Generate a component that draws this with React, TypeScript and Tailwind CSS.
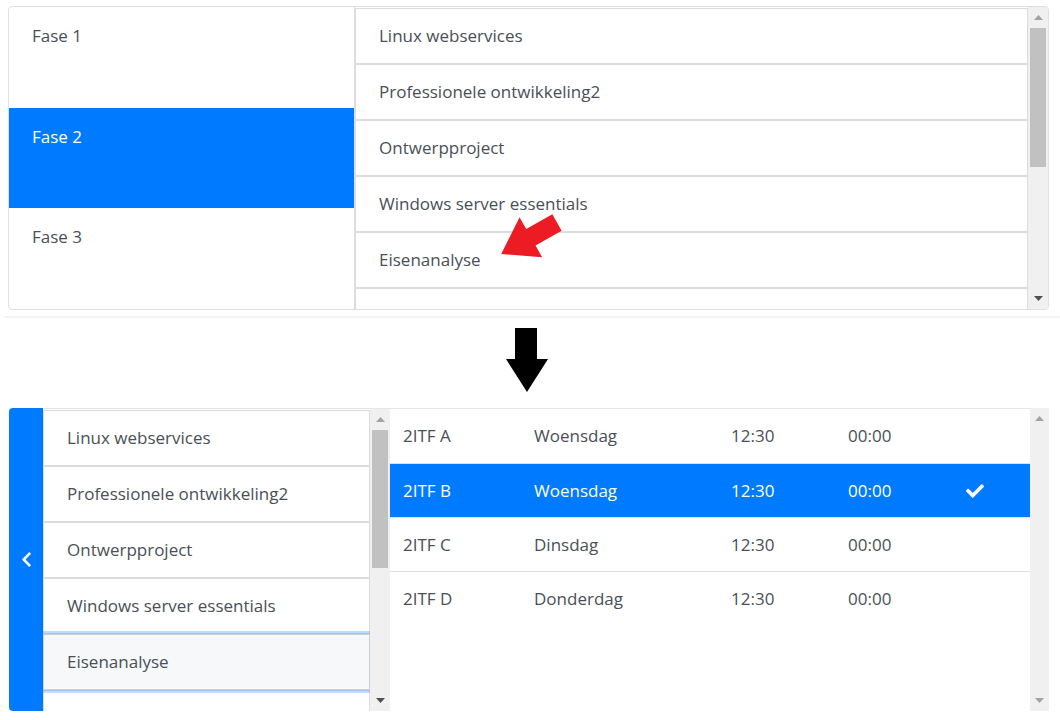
import { FaCheck, FaChevronLeft } from "react-icons/fa";

const courses = [
  "Linux webservices",
  "Professionele ontwikkeling2",
  "Ontwerpproject",
  "Windows server essentials",
  "Eisenanalyse",
  "",
];

const groups = [
  { name: "2ITF A", day: "Woensdag", start: "12:30", end: "00:00" },
  { name: "2ITF B", day: "Woensdag", start: "12:30", end: "00:00", active: true },
  { name: "2ITF C", day: "Dinsdag", start: "12:30", end: "00:00" },
  { name: "2ITF D", day: "Donderdag", start: "12:30", end: "00:00" },
];

function Scrollbar({ thumb, downDark }: { thumb?: [number, number]; downDark?: boolean }) {
  return (
    <div className="w-full h-full bg-[#f0f0f0] flex flex-col items-center justify-between py-[8px]">
      <svg width="9" height="5" viewBox="0 0 9 5">
        <polygon points="4.5,0 9,5 0,5" fill="#a3a3a3" />
      </svg>
      {thumb && (
        <div
          className="absolute left-[2px] right-[2px] bg-[#c1c1c1]"
          style={{ top: thumb[0], height: thumb[1] }}
        />
      )}
      <svg width="9" height="5" viewBox="0 0 9 5">
        <polygon points="0,0 9,0 4.5,5" fill={downDark ? "#505050" : "#a3a3a3"} />
      </svg>
    </div>
  );
}

export default function App() {
  return (
    <div className="relative w-[1060px] h-[720px] bg-white overflow-hidden font-['Open_Sans','Noto_Sans',sans-serif] text-[17px] text-[#495057]">
      {/* before */}
      <div className="pt-[6px] pl-[8px] pr-[11px]">
        <div className="flex h-[304px] border border-[#dfdfdf] rounded-[4px] overflow-hidden">
          <div className="w-[346px] flex flex-col border-r border-[#dcdcdc]">
            {["Fase 1", "Fase 2", "Fase 3"].map((f) => (
              <div
                key={f}
                className={`flex-1 px-[23px] pt-[16px] ${f === "Fase 2" ? "bg-[#007bff] text-white" : ""}`}
              >
                {f}
              </div>
            ))}
          </div>
          <div className="flex-1 flex">
            <div className="flex-1 overflow-hidden pt-px">
              {courses.map((c, i) => (
                <div
                  key={i}
                  className="h-[56px] border border-[#dcdcdc] bg-white px-[23px] flex items-center"
                >
                  {c}
                </div>
              ))}
            </div>
            <div className="relative w-[20px]">
              <Scrollbar thumb={[21, 139]} downDark />
            </div>
          </div>
        </div>
      </div>

      <div className="mt-[6px] ml-[4px] h-[2px] bg-[#f3f3f3]" />

      <div className="h-[90px] pt-[10px] pl-[506px]">
        <svg width="42" height="64" viewBox="0 0 42 64">
          <polygon points="9,0 31,0 31,31 42,31 21,64 0,31 9,31" fill="#000" />
        </svg>
      </div>

      {/* after */}
      <div className="flex h-[303px] pl-[9px]">
        <div className="w-[34px] bg-[#007bff] rounded-l-[4px] flex items-center justify-center text-white">
          <FaChevronLeft size={17} />
        </div>
        <div className="w-[327px] overflow-hidden border-t border-[#e5e5e5] pt-px">
          {courses.map((c, i) => (
            <div
              key={i}
              className={`h-[56px] border px-[23px] flex items-center ${
                c === "Eisenanalyse"
                  ? "relative z-10 bg-[#f7f8fa] border-[#c9d0d8] shadow-[0_0_0_3px_rgba(0,123,255,0.25)]"
                  : "bg-white border-[#dcdcdc]"
              }`}
            >
              {c}
            </div>
          ))}
        </div>
        <div className="relative w-[20px] border-t border-[#e5e5e5]">
          <Scrollbar thumb={[21, 138]} downDark />
        </div>
        <div className="w-[640px] border-t border-[#e5e5e5]">
          {groups.map((g, i) => (
            <div
              key={g.name}
              className={`h-[54px] grid grid-cols-[131px_197px_117px_117px_1fr] items-center ${
                i > 0 ? "border-t border-[#e0e0e0]" : ""
              } ${g.active ? "bg-[#007bff] text-white" : ""}`}
            >
              <div className="pl-[13px]">{g.name}</div>
              <div className="pl-[13px]">{g.day}</div>
              <div className="pl-[13px]">{g.start}</div>
              <div className="pl-[13px]">{g.end}</div>
              <div className="pl-[14px]">{g.active && <FaCheck size={18} />}</div>
            </div>
          ))}
        </div>
        <div className="relative w-[19px]">
          <Scrollbar />
        </div>
      </div>

      {/* red marker arrow */}
      <svg className="absolute inset-0 pointer-events-none" width="1060" height="720">
        <polygon
          points="0,-9.5 30,-9.5 30,-23 64,0 30,23 30,9.5 0,9.5"
          fill="#ed1c24"
          transform="translate(557 222.5) rotate(150.6)"
        />
      </svg>
    </div>
  );
}
